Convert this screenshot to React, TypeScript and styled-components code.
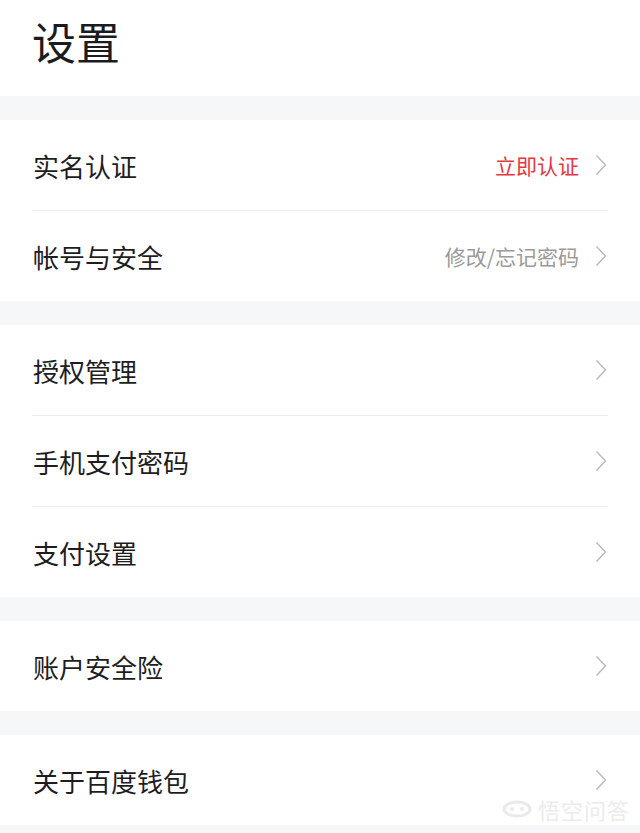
import React from "react";
import styled, { createGlobalStyle } from "styled-components";

const Global = createGlobalStyle`
  html, body { margin: 0; padding: 0; background: #f6f7f9; }
  body { font-family: "Noto Sans CJK SC", "Noto Sans", sans-serif; }
`;

const Page = styled.div`
  position: relative;
  width: 640px;
  min-height: 833px;
  background: #f6f7f9;
  display: flex;
  flex-direction: column;
  gap: 24px;
  overflow: hidden;
`;

const Header = styled.header`
  height: 96px;
  background: #fff;
  box-sizing: border-box;
  padding: 17px 0 0 32px;
`;

const Title = styled.h1`
  margin: 0;
  font-size: 44px;
  line-height: 48px;
  font-weight: 400;
  color: #1c1c1e;
`;

const Section = styled.section`
  background: #fff;
  display: flex;
  flex-direction: column;
  padding: 0 32px;
`;

const Row = styled.div<{ $first?: boolean }>`
  height: 90px;
  display: flex;
  align-items: center;
  border-top: ${(p) => (p.$first ? "none" : "1px solid #ececec")};
`;

const Label = styled.span`
  flex: 1;
  font-size: 26px;
  color: #1d1d1f;
  padding-left: 1px;
`;

const Hint = styled.span<{ $tone: "red" | "gray" }>`
  font-size: 21px;
  color: ${(p) => (p.$tone === "red" ? "#e2383f" : "#9a9a9a")};
  margin-right: 16px;
`;

const Chevron = styled.svg`
  width: 12px;
  height: 22px;
  flex: none;
  margin-right: 1px;
`;

const Watermark = styled.div`
  position: absolute;
  right: 10px;
  bottom: 8px;
  display: flex;
  align-items: center;
  gap: 6px;
  color: #ececec;
  font-size: 22px;
  letter-spacing: 1px;
`;

const Arrow = () => (
  <Chevron viewBox="0 0 12 22">
    <path d="M1.5 1.5 L10.5 11 L1.5 20.5" fill="none" stroke="#b9b9bc" strokeWidth="1.4" />
  </Chevron>
);

type Item = { label: string; hint?: string; tone?: "red" | "gray" };

const groups: Item[][] = [
  [
    { label: "实名认证", hint: "立即认证", tone: "red" },
    { label: "帐号与安全", hint: "修改/忘记密码", tone: "gray" },
  ],
  [{ label: "授权管理" }, { label: "手机支付密码" }, { label: "支付设置" }],
  [{ label: "账户安全险" }],
  [{ label: "关于百度钱包" }],
];

export default function App() {
  return (
    <>
      <Global />
      <Page>
        <Header>
          <Title>设置</Title>
        </Header>
        {groups.map((g, gi) => (
          <Section key={gi}>
            {g.map((it, i) => (
              <Row key={it.label} $first={i === 0}>
                <Label>{it.label}</Label>
                {it.hint && <Hint $tone={it.tone || "gray"}>{it.hint}</Hint>}
                <Arrow />
              </Row>
            ))}
          </Section>
        ))}
        <Watermark>
          <svg width="30" height="18" viewBox="0 0 30 18">
            <ellipse cx="15" cy="9" rx="13" ry="7" fill="none" stroke="#eaeaea" strokeWidth="3" />
            <circle cx="10" cy="9" r="2" fill="#eaeaea" />
            <circle cx="20" cy="9" r="2" fill="#eaeaea" />
          </svg>
          <span>悟空问答</span>
        </Watermark>
      </Page>
    </>
  );
}
